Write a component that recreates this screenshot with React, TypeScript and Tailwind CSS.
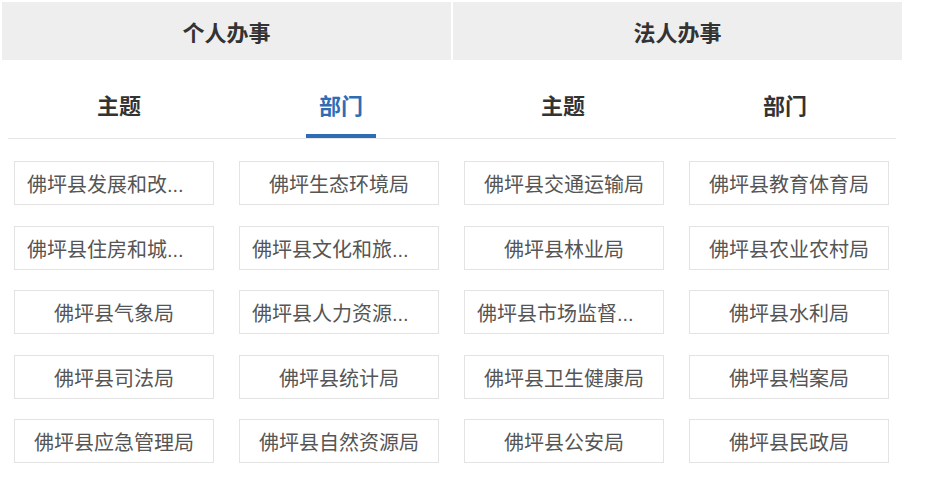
import React from "react";

const rows: string[][] = [
  ["佛坪县发展和改...", "佛坪生态环境局", "佛坪县交通运输局", "佛坪县教育体育局"],
  ["佛坪县住房和城...", "佛坪县文化和旅...", "佛坪县林业局", "佛坪县农业农村局"],
  ["佛坪县气象局", "佛坪县人力资源...", "佛坪县市场监督...", "佛坪县水利局"],
  ["佛坪县司法局", "佛坪县统计局", "佛坪县卫生健康局", "佛坪县档案局"],
  ["佛坪县应急管理局", "佛坪县自然资源局", "佛坪县公安局", "佛坪县民政局"],
];

const tabs = [
  { label: "主题", active: false },
  { label: "部门", active: true },
  { label: "主题", active: false },
  { label: "部门", active: false },
];

export default function App() {
  return (
    <div className="w-[935px] h-[484px] bg-white overflow-hidden font-['Liberation_Sans','Noto_Sans_CJK_SC',sans-serif]">
      <div className="ml-[2px] pt-[2px] flex gap-[2px] w-[900px]">
        <div className="flex-1 h-[58px] pt-[4px] bg-[#eeeeee] flex items-center justify-center text-[22px] font-bold text-[#333333]">
          个人办事
        </div>
        <div className="flex-1 h-[58px] pt-[4px] bg-[#eeeeee] flex items-center justify-center text-[22px] font-bold text-[#333333]">
          法人办事
        </div>
      </div>
      <div className="ml-[8px] w-[888px] grid grid-cols-4 border-b border-[#e6e6e6]">
        {tabs.map((t, i) => (
          <div key={i} className="h-[78px] flex flex-col items-center pt-[33px]">
            <div
              className={
                "text-[22px] font-bold leading-[28px] " +
                (t.active ? "text-[#2e6db4]" : "text-[#333333]")
              }
            >
              {t.label}
            </div>
            {t.active ? <div className="mt-auto w-[70px] h-[4px] bg-[#2e6db4]" /> : null}
          </div>
        ))}
      </div>
      <div className="ml-[14px] mt-[22px] grid grid-cols-[200px_200px_200px_200px] gap-x-[25px] gap-y-[20.5px]">
        {rows.flat().map((name, i) => (
          <div
            key={i}
            className={
              "h-[44px] border border-[#e3e3e3] px-3 pt-[4px] text-[20px] leading-[38px] text-[#555555] whitespace-nowrap " +
              (name.endsWith("...") ? "text-left" : "text-center")
            }
          >
            {name}
          </div>
        ))}
      </div>
    </div>
  );
}
